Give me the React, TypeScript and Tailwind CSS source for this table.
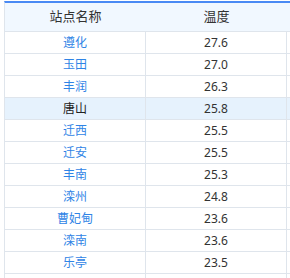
const rows = [
  { name: "遵化", temp: "27.6" },
  { name: "玉田", temp: "27.0" },
  { name: "丰润", temp: "26.3" },
  { name: "唐山", temp: "25.8", active: true },
  { name: "迁西", temp: "25.5" },
  { name: "迁安", temp: "25.5" },
  { name: "丰南", temp: "25.3" },
  { name: "滦州", temp: "24.8" },
  { name: "曹妃甸", temp: "23.6" },
  { name: "滦南", temp: "23.6" },
  { name: "乐亭", temp: "23.5" },
  { name: "", temp: "" },
];

export default function App() {
  return (
    <div
      className="h-[278px] w-[290px] overflow-hidden bg-white pt-px pl-1"
      style={{ fontFamily: '"Noto Sans", "Noto Sans CJK SC", sans-serif' }}
    >
      <div className="flex h-[31px] border-t-2 border-b border-l border-t-[#4a8af4] border-b-[#dfe5ec] border-l-[#dfe5ec] bg-[#f1f8ff] text-[13px] text-[#333]">
        <div className="flex w-[141px] items-center justify-center">站点名称</div>
        <div className="flex w-[141px] items-center justify-center">温度</div>
        <div className="flex-1" />
      </div>
      {rows.map((r, i) => (
        <div
          key={i}
          className={`flex h-[22px] border-b border-l border-[#dfe5ec] text-[12px] ${r.active ? "bg-[#e6f2fd]" : "bg-white"}`}
        >
          <div
            className={`flex w-[141px] items-center justify-center border-r border-[#dfe5ec] ${r.active ? "text-[#222]" : "text-[#2f84e6]"}`}
          >
            {r.name}
          </div>
          <div className="flex w-[141px] items-center justify-center border-r border-[#dfe5ec] text-[#333]">
            {r.temp}
          </div>
          <div className="flex-1" />
        </div>
      ))}
    </div>
  );
}
